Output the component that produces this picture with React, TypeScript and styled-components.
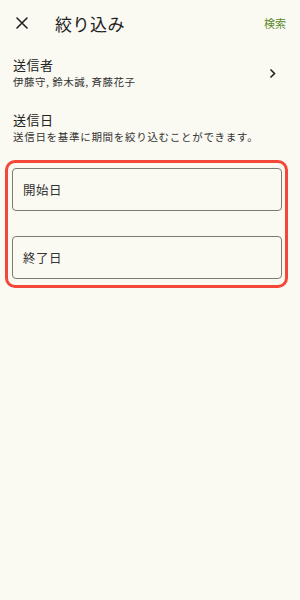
import styled, { createGlobalStyle } from "styled-components";

const GlobalStyle = createGlobalStyle`
  html, body {
    margin: 0;
    padding: 0;
    background: #faf9f2;
  }
  body {
    font-family: "Noto Sans CJK JP", "Noto Sans", sans-serif;
    color: #222;
  }
`;

const Screen = styled.div`
  width: 300px;
  height: 600px;
  background: #faf9f2;
  display: flex;
  flex-direction: column;
`;

const Header = styled.header`
  height: 46px;
  display: flex;
  align-items: center;
  padding: 0 14px 0 16px;
`;

const CloseButton = styled.button`
  width: 12px;
  height: 12px;
  padding: 0;
  border: none;
  background: none;
  display: flex;
  align-items: center;
  justify-content: center;
  color: #222;
`;

const Title = styled.h1`
  margin: 0 0 0 27px;
  font-size: 17px;
  font-weight: 400;
  letter-spacing: 0.5px;
  flex: 1;
`;

const SearchLink = styled.span`
  font-size: 11px;
  color: #5b8a2c;
`;

const Row = styled.div`
  display: flex;
  align-items: center;
  padding: 10px 24px 0 13px;
`;

const RowText = styled.div`
  flex: 1;
  display: flex;
  flex-direction: column;
`;

const Label = styled.div`
  font-size: 13px;
  line-height: 18px;
  letter-spacing: 0.5px;
`;

const Sub = styled.div<{ $spacing?: number }>`
  font-size: 10.5px;
  line-height: 16px;
  color: #333;
  letter-spacing: ${(p) => p.$spacing ?? 0.5}px;
`;

const Section = styled.div`
  padding: 21px 13px 0;
  display: flex;
  flex-direction: column;
`;

const Highlight = styled.div`
  margin: 15px 12px 0 5px;
  border: 3px solid #f4473a;
  border-radius: 10px;
  padding: 5px 3px 6px 4px;
  display: flex;
  flex-direction: column;
  gap: 25px;
`;

const DateField = styled.div`
  height: 43px;
  box-sizing: border-box;
  border: 1px solid #7b7b74;
  border-radius: 4px;
  display: flex;
  align-items: center;
  padding-left: 10px;
  font-size: 12.5px;
  letter-spacing: 0.5px;
  color: #333;
`;

export default function App() {
  return (
    <>
      <GlobalStyle />
      <Screen>
        <Header>
          <CloseButton aria-label="閉じる">
            <svg width="12" height="12" viewBox="0 0 12 12">
              <path d="M1 1 L11 11 M11 1 L1 11" stroke="#222" strokeWidth="1.6" strokeLinecap="round" />
            </svg>
          </CloseButton>
          <Title>絞り込み</Title>
          <SearchLink>検索</SearchLink>
        </Header>

        <Row>
          <RowText>
            <Label>送信者</Label>
            <Sub>伊藤守, 鈴木誠, 斉藤花子</Sub>
          </RowText>
          <svg width="7" height="11" viewBox="0 0 7 11">
            <path d="M1.5 1.5 L5.5 5.5 L1.5 9.5" fill="none" stroke="#222" strokeWidth="1.6" />
          </svg>
        </Row>

        <Section>
          <Label>送信日</Label>
          <Sub $spacing={0.7}>送信日を基準に期間を絞り込むことができます。</Sub>
        </Section>

        <Highlight>
          <DateField>開始日</DateField>
          <DateField>終了日</DateField>
        </Highlight>
      </Screen>
    </>
  );
}
